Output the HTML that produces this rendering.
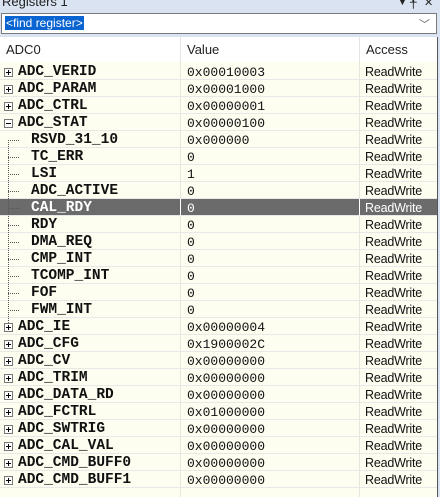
<!DOCTYPE html><html><head><style>
body{margin:0;width:440px;height:497px;overflow:hidden;background:#d9e3f1;position:relative;font-family:"Liberation Sans",sans-serif}
.t{position:absolute;left:2px;top:-6px;font-size:13px;color:#222}
.ic{position:absolute;top:-4px;font-size:11px;color:#222}
.find{position:absolute;left:1px;top:13px;width:434px;height:19px;border:1px solid #7a7a7a;background:#fff}
.find span{position:absolute;left:3px;top:2px;background:#0a64d2;color:#fff;font-size:12px;padding:0 1px;line-height:14px}
.find i{position:absolute;right:6px;top:2px;font-style:normal;font-size:11px;color:#666}
.grid{position:absolute;left:0;top:37px;width:437px;height:460px;background:#fdfdf0;border-right:1px solid #555}
.hd{position:absolute;left:0;top:0;width:437px;height:25px;background:#fff;font-size:13px;color:#222}
.hd div{position:absolute;top:5px}
.vl{position:absolute;top:0;width:1px;height:460px;background:#e6e6e0;z-index:2}
.rows{position:absolute;left:0;top:26px;width:437px}
.r{position:relative;width:437px;height:16px;border-bottom:1px solid #e8e8e8;font-size:12px;color:#111}
.r.s{background:#6b6b6b;color:#fff}
.r.s:after{content:"";position:absolute;left:180px;top:0;height:17px;border-left:1px solid #fff;border-right:1px solid #fff;box-sizing:border-box;z-index:3;width:180px}
.n{position:absolute;left:18px;top:1px;font-family:"Liberation Mono",monospace;font-weight:bold;font-size:14.5px;line-height:17px}
.c .n{left:31px}
.v{position:absolute;left:187px;top:1px;font-family:"Liberation Mono",monospace;font-size:13px;line-height:17px}
.a{position:absolute;left:365px;top:1px;line-height:17px;font-size:12.5px;letter-spacing:-0.2px}
.b{position:absolute;left:4px;top:5px;width:7px;height:7px;border:1px solid #777;background:#fff}
.b:before{content:"";position:absolute;left:1px;top:3px;width:5px;height:1px;background:#000}
.b.p:after{content:"";position:absolute;left:3px;top:1px;width:1px;height:5px;background:#000}
.c:before{content:"";position:absolute;left:8px;top:9px;width:11px;border-top:1px dotted #555}
.ln{position:absolute;left:8px;top:103px;width:0;height:183px;border-left:1px dotted #555;z-index:2}
</style></head><body>
<div class="t">Registers 1</div><div class="ic" style="left:397px">▼</div><div class="ic" style="left:410px">╀</div><div class="ic" style="left:424px">✕</div>
<div class="find"><span>&lt;find register&gt;</span><i>﹀</i></div>
<div class="grid">
<div class="hd"><div style="left:6px">ADC0</div><div style="left:187px">Value</div><div style="left:366px">Access</div></div>
<div class="vl" style="left:180px"></div><div class="vl" style="left:359px"></div>
<div class="ln"></div>
<div class="rows">
<div class="r"><div class="b p"></div><div class="n">ADC_VERID</div><div class="v">0x00010003</div><div class="a">ReadWrite</div></div>
<div class="r"><div class="b p"></div><div class="n">ADC_PARAM</div><div class="v">0x00001000</div><div class="a">ReadWrite</div></div>
<div class="r"><div class="b p"></div><div class="n">ADC_CTRL</div><div class="v">0x00000001</div><div class="a">ReadWrite</div></div>
<div class="r"><div class="b"></div><div class="n">ADC_STAT</div><div class="v">0x00000100</div><div class="a">ReadWrite</div></div>
<div class="r c"><div class="n">RSVD_31_10</div><div class="v">0x000000</div><div class="a">ReadWrite</div></div>
<div class="r c"><div class="n">TC_ERR</div><div class="v">0</div><div class="a">ReadWrite</div></div>
<div class="r c"><div class="n">LSI</div><div class="v">1</div><div class="a">ReadWrite</div></div>
<div class="r c"><div class="n">ADC_ACTIVE</div><div class="v">0</div><div class="a">ReadWrite</div></div>
<div class="r c s"><div class="n">CAL_RDY</div><div class="v">0</div><div class="a">ReadWrite</div></div>
<div class="r c"><div class="n">RDY</div><div class="v">0</div><div class="a">ReadWrite</div></div>
<div class="r c"><div class="n">DMA_REQ</div><div class="v">0</div><div class="a">ReadWrite</div></div>
<div class="r c"><div class="n">CMP_INT</div><div class="v">0</div><div class="a">ReadWrite</div></div>
<div class="r c"><div class="n">TCOMP_INT</div><div class="v">0</div><div class="a">ReadWrite</div></div>
<div class="r c"><div class="n">FOF</div><div class="v">0</div><div class="a">ReadWrite</div></div>
<div class="r c"><div class="n">FWM_INT</div><div class="v">0</div><div class="a">ReadWrite</div></div>
<div class="r"><div class="b p"></div><div class="n">ADC_IE</div><div class="v">0x00000004</div><div class="a">ReadWrite</div></div>
<div class="r"><div class="b p"></div><div class="n">ADC_CFG</div><div class="v">0x1900002C</div><div class="a">ReadWrite</div></div>
<div class="r"><div class="b p"></div><div class="n">ADC_CV</div><div class="v">0x00000000</div><div class="a">ReadWrite</div></div>
<div class="r"><div class="b p"></div><div class="n">ADC_TRIM</div><div class="v">0x00000000</div><div class="a">ReadWrite</div></div>
<div class="r"><div class="b p"></div><div class="n">ADC_DATA_RD</div><div class="v">0x00000000</div><div class="a">ReadWrite</div></div>
<div class="r"><div class="b p"></div><div class="n">ADC_FCTRL</div><div class="v">0x01000000</div><div class="a">ReadWrite</div></div>
<div class="r"><div class="b p"></div><div class="n">ADC_SWTRIG</div><div class="v">0x00000000</div><div class="a">ReadWrite</div></div>
<div class="r"><div class="b p"></div><div class="n">ADC_CAL_VAL</div><div class="v">0x00000000</div><div class="a">ReadWrite</div></div>
<div class="r"><div class="b p"></div><div class="n">ADC_CMD_BUFF0</div><div class="v">0x00000000</div><div class="a">ReadWrite</div></div>
<div class="r"><div class="b p"></div><div class="n">ADC_CMD_BUFF1</div><div class="v">0x00000000</div><div class="a">ReadWrite</div></div>
</div>
</div>
</body></html>
